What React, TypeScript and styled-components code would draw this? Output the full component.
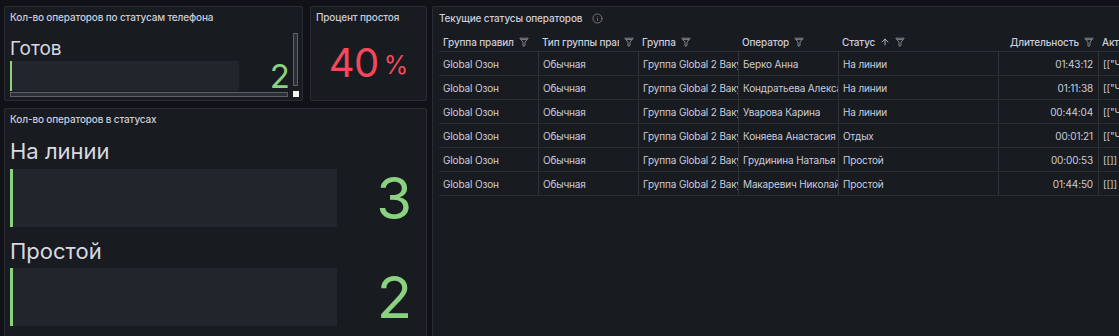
import styled, { createGlobalStyle } from "styled-components";
import { Info, ArrowUp } from "lucide-react";

// global
const GlobalStyle = createGlobalStyle`
  html, body {
    margin: 0;
    padding: 0;
    background: #111217;
    overflow: hidden;
  }
  body {
    font-family: Inter, "Noto Sans", sans-serif;
    color: #ccccdc;
  }
`;

const GREEN = "#8bd280";

// layout
const Page = styled.div`
  display: flex;
  gap: 5px;
  padding: 6px 0 0 4px;
  width: 1119px;
  height: 336px;
  box-sizing: border-box;
  overflow: hidden;
`;

const LeftCol = styled.div`
  display: flex;
  flex-direction: column;
  gap: 7px;
  width: 423px;
  flex-shrink: 0;
`;

const TopRow = styled.div`
  display: flex;
  gap: 7px;
`;

const Panel = styled.section<{ $w: number; $h: number }>`
  position: relative;
  display: flex;
  flex-direction: column;
  flex-shrink: 0;
  width: ${(p) => p.$w}px;
  height: ${(p) => p.$h}px;
  box-sizing: border-box;
  background: #181b1f;
  border: 1px solid #2a2d33;
  border-radius: 2px;
  overflow: hidden;
`;

const PanelHeader = styled.header<{ $h?: number; $pad?: number }>`
  display: flex;
  align-items: center;
  gap: 10px;
  height: ${(p) => p.$h ?? 20}px;
  padding: 0 ${(p) => p.$pad ?? 5}px;
  flex-shrink: 0;
  font-size: 10px;
  letter-spacing: -0.15px;
  font-weight: 500;
  color: #ccccdc;
  white-space: nowrap;
`;

// bar gauge
const GaugeBody = styled.div<{ $padR: number }>`
  display: flex;
  flex-direction: column;
  padding: 0 ${(p) => p.$padR}px 0 5px;
`;

const GaugeLabel = styled.div<{ $size: number; $top: number }>`
  font-size: ${(p) => p.$size}px;
  line-height: ${(p) => p.$size + 4}px;
  margin-top: ${(p) => p.$top}px;
  color: #d8d9e0;
  white-space: nowrap;
`;

const GaugeRow = styled.div<{ $h: number; $top: number }>`
  display: flex;
  align-items: center;
  justify-content: space-between;
  height: ${(p) => p.$h}px;
  margin-top: ${(p) => p.$top}px;
`;

const GaugeBar = styled.div<{ $w: number; $edge: number }>`
  width: ${(p) => p.$w}px;
  height: 100%;
  box-sizing: border-box;
  background: #22252b;
  border-left: ${(p) => p.$edge}px solid ${GREEN};
`;

const GaugeValue = styled.div<{ $size: number }>`
  font-size: ${(p) => p.$size}px;
  line-height: 1;
  color: ${GREEN};
  font-weight: 400;
`;

// fake scrollbars over panel content
const ScrollV = styled.div`
  position: absolute;
  left: 288px;
  top: 26px;
  width: 5px;
  height: 53px;
  box-sizing: border-box;
  background: #2b2e34;
  border: 1px solid #5d6066;
`;

const ScrollH = styled.div`
  position: absolute;
  left: 5px;
  top: 85px;
  width: 278px;
  height: 5px;
  box-sizing: border-box;
  background: #2b2e34;
  border: 1px solid #5d6066;
`;

const ScrollCorner = styled.div`
  position: absolute;
  left: 288px;
  top: 84px;
  width: 6px;
  height: 6px;
  background: #f2f2f2;
`;

// stat
const StatBody = styled.div`
  flex: 1;
  display: flex;
  align-items: center;
  justify-content: center;
  padding-bottom: 2px;
  color: #f2495c;
`;

const StatNumber = styled.span`
  font-size: 40px;
  letter-spacing: -0.5px;
  line-height: 1;
`;

const StatUnit = styled.span`
  font-size: 25px;
  margin-left: 5px;
  line-height: 1;
  align-self: flex-end;
  padding-bottom: 20px;
`;

// table
const Table = styled.div`
  margin: 3px 0 0 6px;
  font-size: 10px;
  letter-spacing: -0.15px;
`;

const cols = "99px 100px 100px 100px 160px 100px 200px";

const HeadRow = styled.div`
  display: grid;
  grid-template-columns: ${cols};
  height: 19px;
  border-bottom: 1px solid #2c2f35;
`;

const HeadCell = styled.div<{ $right?: boolean }>`
  display: flex;
  align-items: center;
  justify-content: ${(p) => (p.$right ? "flex-end" : "flex-start")};
  gap: 5px;
  padding: 0 4px 0 4px;
  font-weight: 500;
  color: #ccccdc;
  white-space: nowrap;
  overflow: hidden;
  min-width: 0;
`;

const HeadText = styled.span`
  overflow: hidden;
  min-width: 0;
  flex: 0 1 auto;
`;

const Row = styled.div`
  display: grid;
  grid-template-columns: ${cols};
  height: 23px;
  border-bottom: 1px solid #2a2d32;
`;

const Cell = styled.div<{ $right?: boolean; $first?: boolean }>`
  display: flex;
  align-items: center;
  justify-content: ${(p) => (p.$right ? "flex-end" : "flex-start")};
  padding: 0 5px 0 4px;
  border-left: ${(p) => (p.$first ? "none" : "1px solid #2f3238")};
  color: #ccccdc;
  white-space: nowrap;
  overflow: hidden;
  min-width: 0;
`;

const FilterIcon = () => (
  <svg width="10" height="10" viewBox="0 0 10 10" style={{ flexShrink: 0 }}>
    <path
      d="M0.8 1.2h8.4L6 5.2v3.4L4 9.2V5.2z M1.8 2.6h6.4"
      fill="none"
      stroke="#80838a"
      strokeWidth="1"
      strokeLinejoin="round"
    />
  </svg>
);

// data
interface OperatorRow {
  name: string;
  status: string;
  duration: string;
  activity: string;
}

const rows: OperatorRow[] = [
  { name: "Берко Анна", status: "На линии", duration: "01:43:12", activity: '[["Чат"]]' },
  { name: "Кондратьева Александра", status: "На линии", duration: "01:11:38", activity: '[["Чат"]]' },
  { name: "Уварова Карина", status: "На линии", duration: "00:44:04", activity: '[["Чат"]]' },
  { name: "Коняева Анастасия", status: "Отдых", duration: "00:01:21", activity: '[["Чат"]]' },
  { name: "Грудинина Наталья", status: "Простой", duration: "00:00:53", activity: "[[]]" },
  { name: "Макаревич Николай", status: "Простой", duration: "01:44:50", activity: "[[]]" },
];

// Main
const App = () => {
  return (
    <>
      <GlobalStyle />
      <Page>
        <LeftCol>
          <TopRow>
            <Panel $w={299} $h={95}>
              <PanelHeader>Кол-во операторов по статусам телефона</PanelHeader>
              <GaugeBody $padR={12}>
                <GaugeLabel $size={19} $top={10}>Готов</GaugeLabel>
                <GaugeRow $h={30} $top={1}>
                  <GaugeBar $w={229} $edge={2} />
                  <GaugeValue $size={33}>2</GaugeValue>
                </GaugeRow>
              </GaugeBody>
              <ScrollV />
              <ScrollH />
              <ScrollCorner />
            </Panel>

            <Panel $w={117} $h={95}>
              <PanelHeader>Процент простоя</PanelHeader>
              <StatBody>
                <StatNumber>40</StatNumber>
                <StatUnit>%</StatUnit>
              </StatBody>
            </Panel>
          </TopRow>

          <Panel $w={423} $h={240}>
            <PanelHeader>Кол-во операторов в статусах</PanelHeader>
            <GaugeBody $padR={14}>
              <GaugeLabel $size={22} $top={9}>На линии</GaugeLabel>
              <GaugeRow $h={58} $top={5}>
                <GaugeBar $w={327} $edge={3} />
                <GaugeValue $size={58}>3</GaugeValue>
              </GaugeRow>
              <GaugeLabel $size={22} $top={11}>Простой</GaugeLabel>
              <GaugeRow $h={58} $top={4}>
                <GaugeBar $w={327} $edge={3} />
                <GaugeValue $size={58}>2</GaugeValue>
              </GaugeRow>
            </GaugeBody>
          </Panel>
        </LeftCol>

        <Panel $w={700} $h={340}>
          <PanelHeader $h={22} $pad={6}>
            Текущие статусы операторов
            <Info size={11} color="#8e9099" strokeWidth={1.6} />
          </PanelHeader>
          <Table>
            <HeadRow>
              <HeadCell>
                <HeadText>Группа правил</HeadText>
                <FilterIcon />
              </HeadCell>
              <HeadCell>
                <HeadText>Тип группы правил</HeadText>
                <FilterIcon />
              </HeadCell>
              <HeadCell>
                <HeadText>Группа</HeadText>
                <FilterIcon />
              </HeadCell>
              <HeadCell>
                <HeadText>Оператор</HeadText>
                <FilterIcon />
              </HeadCell>
              <HeadCell>
                <HeadText>Статус</HeadText>
                <ArrowUp size={10} color="#ccccdc" strokeWidth={2} />
                <FilterIcon />
              </HeadCell>
              <HeadCell $right>
                <HeadText>Длительность</HeadText>
                <FilterIcon />
              </HeadCell>
              <HeadCell>
                <HeadText>Активность</HeadText>
              </HeadCell>
            </HeadRow>

            {rows.map((r, i) => (
              <Row key={i}>
                <Cell $first>Global Озон</Cell>
                <Cell>Обычная</Cell>
                <Cell>Группа Global 2 Вакуум</Cell>
                <Cell>{r.name}</Cell>
                <Cell>{r.status}</Cell>
                <Cell $right>{r.duration}</Cell>
                <Cell>{r.activity}</Cell>
              </Row>
            ))}
          </Table>
        </Panel>
      </Page>
    </>
  );
};

export default App;
